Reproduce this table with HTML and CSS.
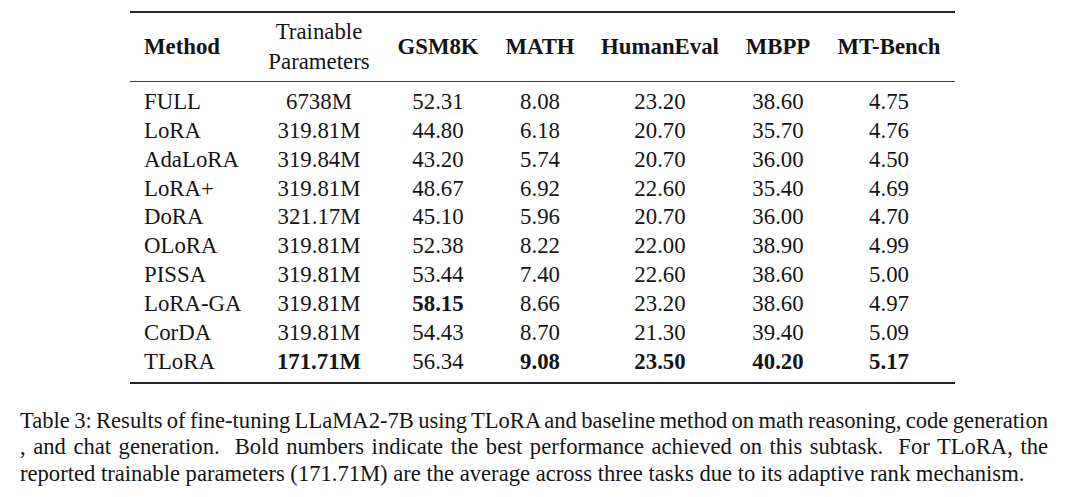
FILE: index.html
```html
<!DOCTYPE html>
<html lang="en">
<head>
<meta charset="utf-8">
<title>Table 3</title>
<link rel="stylesheet" href="styles.css">
</head>
<body>
<main class="page">
  <table class="results">
    <colgroup>
      <col class="c-method">
      <col class="c-params">
      <col class="c-gsm">
      <col class="c-math">
      <col class="c-human">
      <col class="c-mbpp">
      <col class="c-mt">
    </colgroup>
    <thead>
      <tr>
        <th class="method bold">Method</th>
        <th class="plain">Trainable<br>Parameters</th>
        <th class="bold">GSM8K</th>
        <th class="bold">MATH</th>
        <th class="bold">HumanEval</th>
        <th class="bold">MBPP</th>
        <th class="bold mt">MT-Bench</th>
      </tr>
    </thead>
    <tbody>
      <tr><td class="method">FULL</td><td>6738M</td><td>52.31</td><td>8.08</td><td>23.20</td><td>38.60</td><td class="mt">4.75</td></tr>
      <tr><td class="method">LoRA</td><td>319.81M</td><td>44.80</td><td>6.18</td><td>20.70</td><td>35.70</td><td class="mt">4.76</td></tr>
      <tr><td class="method">AdaLoRA</td><td>319.84M</td><td>43.20</td><td>5.74</td><td>20.70</td><td>36.00</td><td class="mt">4.50</td></tr>
      <tr><td class="method">LoRA+</td><td>319.81M</td><td>48.67</td><td>6.92</td><td>22.60</td><td>35.40</td><td class="mt">4.69</td></tr>
      <tr><td class="method">DoRA</td><td>321.17M</td><td>45.10</td><td>5.96</td><td>20.70</td><td>36.00</td><td class="mt">4.70</td></tr>
      <tr><td class="method">OLoRA</td><td>319.81M</td><td>52.38</td><td>8.22</td><td>22.00</td><td>38.90</td><td class="mt">4.99</td></tr>
      <tr><td class="method">PISSA</td><td>319.81M</td><td>53.44</td><td>7.40</td><td>22.60</td><td>38.60</td><td class="mt">5.00</td></tr>
      <tr><td class="method">LoRA-GA</td><td>319.81M</td><td class="best">58.15</td><td>8.66</td><td>23.20</td><td>38.60</td><td class="mt">4.97</td></tr>
      <tr><td class="method">CorDA</td><td>319.81M</td><td>54.43</td><td>8.70</td><td>21.30</td><td>39.40</td><td class="mt">5.09</td></tr>
      <tr><td class="method">TLoRA</td><td class="best">171.71M</td><td>56.34</td><td class="best">9.08</td><td class="best">23.50</td><td class="best">40.20</td><td class="mt best">5.17</td></tr>
    </tbody>
  </table>
  <p class="caption">
    <span class="line justified tight">Table 3: Results of fine-tuning LLaMA2-7B using TLoRA and baseline method on math reasoning, code generation</span>
    <span class="line justified">, and chat generation. &nbsp;Bold numbers indicate the best performance achieved on this subtask. &nbsp;For TLoRA, the</span>
    <span class="line">reported trainable parameters (171.71M) are the average across three tasks due to its adaptive rank mechanism.</span>
  </p>
</main>
</body>
</html>
```

FILE: styles.css
```css
html, body {
  margin: 0;
  padding: 0;
  background: #ffffff;
}

body {
  font-family: "Liberation Serif", "Times New Roman", serif;
  color: #141414;
  width: 1080px;
  height: 497px;
  overflow: hidden;
}

.page {
  padding-top: 11px;
}

.results {
  margin-left: 130px;
  width: 825px;
  table-layout: fixed;
  border-collapse: collapse;
  border-top: 2px solid #262626;
  border-bottom: 2px solid #262626;
  font-size: 22.8px;
}

.c-method { width: 135px; }
.c-params { width: 108px; }
.c-gsm { width: 130px; }
.c-math { width: 74px; }
.c-human { width: 166px; }
.c-mbpp { width: 70px; }
.c-mt { width: 142px; }

.results th,
.results td {
  padding: 0;
  text-align: center;
  white-space: nowrap;
}

.results thead tr {
  border-bottom: 1px solid #3a3a3a;
}

.results th {
  line-height: 30px;
  padding-top: 4px;
  padding-bottom: 4px;
  vertical-align: middle;
}

.results th.bold {
  font-weight: 700;
}

.results th.plain {
  font-weight: 400;
}

.results td {
  line-height: 28.86px;
}

.results .method {
  text-align: left;
  padding-left: 14px;
}

.results .mt {
  padding-left: 10px;
}

.results tbody tr:first-child td {
  padding-top: 6px;
}

.results tbody tr:last-child td {
  padding-bottom: 5px;
}

.results .best {
  font-weight: 700;
}

.caption {
  margin: 24px 0 0 20px;
  width: 1028px;
  font-size: 22.6px;
  line-height: 26.7px;
}

.caption .line {
  display: block;
  white-space: nowrap;
}

.caption .line.justified {
  text-align: justify;
  text-align-last: justify;
}

.caption .line.tight {
  word-spacing: -2px;
}
```
